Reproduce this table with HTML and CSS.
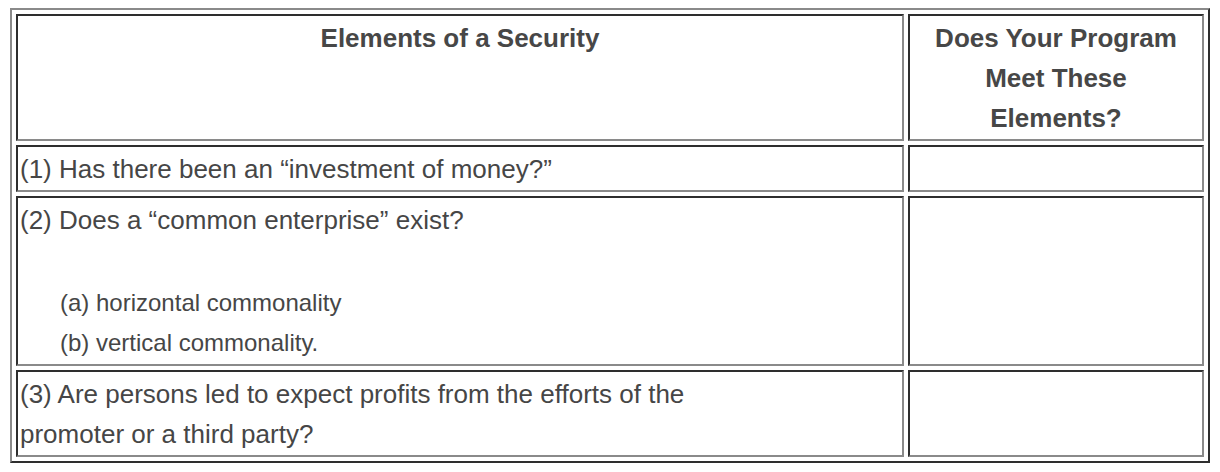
FILE: index.html
```html
<!DOCTYPE html>
<html lang="en">
<head>
<meta charset="utf-8">
<title>Elements of a Security</title>
<link rel="stylesheet" href="styles.css">
</head>
<body>
<table class="grid">
  <colgroup>
    <col class="col-main">
    <col class="col-check">
  </colgroup>
  <thead>
    <tr>
      <th>Elements of a Security</th>
      <th class="th-check">Does Your Program Meet These Elements?</th>
    </tr>
  </thead>
  <tbody>
    <tr>
      <td>(1) Has there been an “investment of money?”</td>
      <td></td>
    </tr>
    <tr>
      <td>
        <div>(2) Does a “common enterprise” exist?</div>
        <div class="sub">
          <div>(a) horizontal commonality</div>
          <div>(b) vertical commonality.</div>
        </div>
      </td>
      <td></td>
    </tr>
    <tr>
      <td>(3) Are persons led to expect profits from the efforts of the<br>promoter or a third party?</td>
      <td></td>
    </tr>
  </tbody>
</table>
</body>
</html>
```
FILE: styles.css
```css
html, body {
  margin: 0;
  padding: 0;
  background: #ffffff;
}
body {
  padding: 8px 10px;
  font-family: "Liberation Sans", Arial, Helvetica, sans-serif;
  font-size: 26px;
  line-height: 40px;
  color: #464646;
}
.grid {
  table-layout: fixed;
  width: 1200px;
  border-collapse: separate;
  border-spacing: 4px;
  border-width: 2px;
  border-style: solid;
  border-color: #8a8a8a #2e2e2e #2e2e2e #8a8a8a;
}
.col-main { width: 888px; }
.col-check { width: 296px; }
.grid th,
.grid td {
  border-width: 2px;
  border-style: solid;
  border-color: #2e2e2e #8a8a8a #8a8a8a #2e2e2e;
  padding: 2px 2px 1px 2px;
  vertical-align: top;
}
.grid th {
  font-weight: bold;
  text-align: center;
  color: #474747;
}
.grid th.th-check {
  padding-left: 12px;
  padding-right: 12px;
}
.grid td {
  text-align: left;
}
.sub {
  margin-top: 43px;
  padding-left: 40px;
  font-size: 24px;
}
```
